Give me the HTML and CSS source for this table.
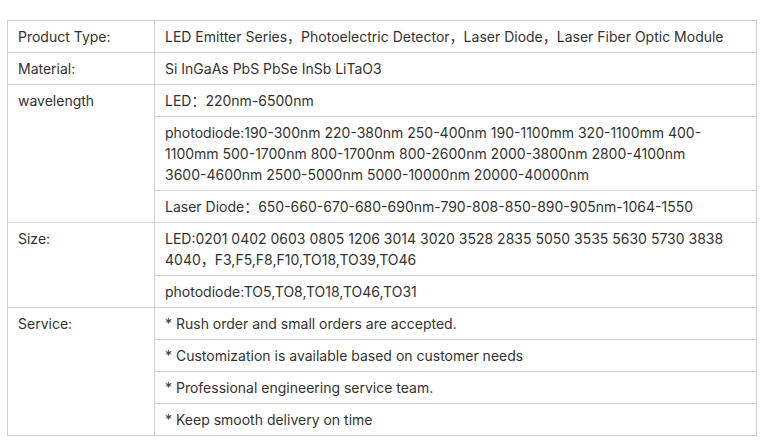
FILE: index.html
```html
<!DOCTYPE html>
<html>
<head>
<meta charset="utf-8">
<link rel="stylesheet" href="styles.css">
</head>
<body>
<table class="spec">
<tbody>
<tr><td class="label">Product Type:</td><td>LED Emitter Series，Photoelectric Detector，Laser Diode，Laser Fiber Optic Module</td></tr>
<tr><td class="label">Material:</td><td>Si InGaAs PbS PbSe InSb LiTaO3</td></tr>
<tr><td class="label" rowspan="3">wavelength</td><td>LED：220nm-6500nm</td></tr>
<tr><td>photodiode:190-300nm 220-380nm 250-400nm 190-1100mm 320-1100mm 400-1100mm 500-1700nm 800-1700nm 800-2600nm 2000-3800nm 2800-4100nm <span class="nowrap">3600-4600nm</span> 2500-5000nm 5000-10000nm 20000-40000nm</td></tr>
<tr><td>Laser Diode：650-660-670-680-690nm-790-808-850-890-905nm-1064-1550</td></tr>
<tr><td class="label" rowspan="2">Size:</td><td>LED:0201 0402 0603 0805 1206 3014 3020 3528 2835 5050 3535 5630 5730 3838 4040，F3,F5,F8,F10,TO18,TO39,TO46</td></tr>
<tr><td>photodiode:TO5,TO8,TO18,TO46,TO31</td></tr>
<tr><td class="label" rowspan="4">Service:</td><td>* Rush order and small orders are accepted.</td></tr>
<tr><td>* Customization is available based on customer needs</td></tr>
<tr><td>* Professional engineering service team.</td></tr>
<tr><td>* Keep smooth delivery on time</td></tr>
</tbody>
</table>
</body>
</html>
```
FILE: styles.css
```css
html, body {
  margin: 0;
  padding: 0;
  background: #fff;
}
body {
  padding: 20px 0 0 7px;
  font-family: Inter, "Noto Sans CJK SC", sans-serif;
  font-size: 14px;
  line-height: 21px;
  color: #333;
}
.spec {
  border-collapse: collapse;
  width: 750px;
  table-layout: fixed;
}
.spec td {
  border: 1px solid #d0d0d0;
  padding: 5px 10px;
  vertical-align: top;
  text-align: left;
}
.spec td.label {
  width: 126px;
}
.nowrap {
  white-space: nowrap;
}
```
